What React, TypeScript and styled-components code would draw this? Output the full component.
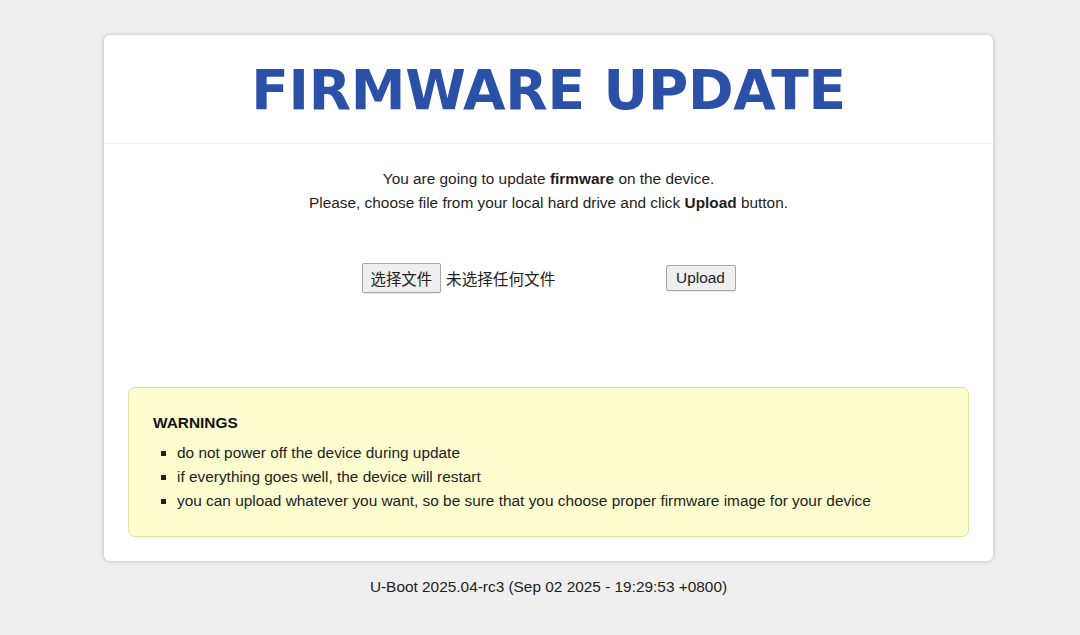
import React from 'react';
import styled, { createGlobalStyle } from 'styled-components';

const GlobalStyle = createGlobalStyle`
  html, body {
    margin: 0;
    padding: 0;
    background: #efefef;
  }
  body {
    font-family: "Liberation Sans", Arial, sans-serif;
    color: #222;
  }
`;

const Page = styled.div`
  width: 1080px;
  min-height: 635px;
  padding: 34px 0 0 103px;
  box-sizing: border-box;
`;

const Card = styled.div`
  width: 891px;
  height: 528px;
  box-sizing: border-box;
  background: #fff;
  border: 1px solid #d8d8d8;
  border-radius: 7px;
  box-shadow: 0 0 4px rgba(0, 0, 0, 0.12);
  display: flex;
  flex-direction: column;
`;

const Header = styled.header`
  height: 108px;
  display: flex;
  align-items: center;
  justify-content: center;
  border-bottom: 1px solid #f1f1f1;
`;

const Title = styled.h1`
  margin: 0;
  font-family: "DejaVu Sans", Verdana, sans-serif;
  font-weight: bold;
  font-size: 55px;
  color: #2a51a7;
  letter-spacing: -0.3px;
  line-height: 1;
  padding-top: 2px;
`;

const Content = styled.div`
  flex: 1;
  display: flex;
  flex-direction: column;
  padding-top: 23px;
`;

const Intro = styled.p`
  margin: 0;
  text-align: center;
  font-size: 15.4px;
  line-height: 24px;
  color: #1e1e1e;
`;

const FormRow = styled.div`
  margin-top: 48px;
  display: flex;
  justify-content: center;
  align-items: center;
  height: 30px;
`;

const FileInput = styled.div`
  width: 300px;
  display: flex;
  align-items: center;
  gap: 5px;
  font-family: "Liberation Sans", "Noto Sans CJK SC", sans-serif;
  font-size: 15.6px;
  color: #222;
`;

const Button = styled.button<{ $tall?: boolean }>`
  height: ${(p) => (p.$tall ? '30px' : '26px')};
  padding: 0 ${(p) => (p.$tall ? '8px' : '6px')};
  background: #efefef;
  border: 1px solid #a6a6a6;
  border-radius: 2px;
  font-family: "Liberation Sans", "Noto Sans CJK SC", sans-serif;
  font-size: 15.4px;
  color: #222;
  box-shadow: 0 1px 1px rgba(0, 0, 0, 0.08);
`;

const UploadButton = styled(Button)`
  margin-left: 4px;
  width: 70px;
`;

const Warnings = styled.div`
  margin: auto 24px 24px;
  height: 150px;
  box-sizing: border-box;
  background: #fefdd0;
  border: 1px solid #e6de9c;
  border-radius: 7px;
  padding: 23px 24px 0;
`;

const WarnTitle = styled.h3`
  margin: 0;
  font-size: 15.4px;
  line-height: 24px;
  font-weight: bold;
  color: #111;
`;

const WarnList = styled.ul`
  margin: 6px 0 0;
  padding-left: 24px;
  list-style: square;
  font-size: 15.4px;
  line-height: 24px;
  color: #222;
`;

const Footer = styled.footer`
  width: 891px;
  margin-top: 15px;
  text-align: center;
  font-size: 15.4px;
  line-height: 20px;
  color: #222;
`;

export default function App() {
  return (
    <>
      <GlobalStyle />
      <Page>
        <Card>
          <Header>
            <Title>FIRMWARE UPDATE</Title>
          </Header>
          <Content>
            <Intro>
              You are going to update <b>firmware</b> on the device.
              <br />
              Please, choose file from your local hard drive and click <b>Upload</b> button.
            </Intro>
            <FormRow>
              <FileInput>
                <Button $tall type="button">选择文件</Button>
                <span>未选择任何文件</span>
              </FileInput>
              <UploadButton type="button">Upload</UploadButton>
            </FormRow>
            <Warnings>
              <WarnTitle>WARNINGS</WarnTitle>
              <WarnList>
                <li>do not power off the device during update</li>
                <li>if everything goes well, the device will restart</li>
                <li>you can upload whatever you want, so be sure that you choose proper firmware image for your device</li>
              </WarnList>
            </Warnings>
          </Content>
        </Card>
        <Footer>U-Boot 2025.04-rc3 (Sep 02 2025 - 19:29:53 +0800)</Footer>
      </Page>
    </>
  );
}
